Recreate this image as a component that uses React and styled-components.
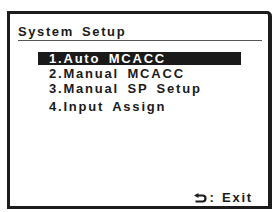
import styled, { createGlobalStyle } from "styled-components";

const Global = createGlobalStyle`
  body {
    margin: 0;
    background: #fff;
  }
`;

const items = [
  { label: "1.Auto MCACC", active: true },
  { label: "2.Manual MCACC" },
  { label: "3.Manual SP Setup" },
  { label: "4.Input Assign", gap: true },
];

export default function App() {
  return (
    <>
      <Global />
      <Screen>
        <Title>System Setup</Title>
        <Menu>
          {items.map((it) => (
            <Item key={it.label} $active={it.active} $gap={it.gap}>
              {it.label}
            </Item>
          ))}
        </Menu>
        <Footer>
          <svg width="13" height="10" viewBox="0 0 13 10">
            <path d="M0 2.5 L4.5 0 L4.5 5 Z" fill="#1a1a1a" />
            <path
              d="M4 2.5 H8.5 A3 3 0 0 1 8.5 8.5 H1.5"
              fill="none"
              stroke="#1a1a1a"
              strokeWidth="2.2"
            />
          </svg>
          <span>: Exit</span>
        </Footer>
      </Screen>
    </>
  );
}

const Screen = styled.div`
  box-sizing: border-box;
  margin: 11px 0 0 7px;
  width: 265px;
  height: 198px;
  border: 3px solid #1c1c1c;
  border-right-width: 4px;
  border-top-right-radius: 5px;
  display: flex;
  flex-direction: column;
  padding: 10px 6px 0 8px;
  font-family: "Liberation Sans", Arial, sans-serif;
  font-weight: bold;
  color: #1a1a1a;
`;

const Title = styled.div`
  font-size: 13px;
  line-height: 15px;
  letter-spacing: 1.6px;
  word-spacing: 3px;
  padding: 0 0 1px 0;
  border-bottom: 1px solid #555;
`;

const Menu = styled.div`
  display: flex;
  flex-direction: column;
  margin: 11px 0 0 20px;
  width: 203px;
`;

const Item = styled.div`
  font-size: 13px;
  line-height: 13px;
  height: 13px;
  letter-spacing: 1.8px;
  word-spacing: 3px;
  padding-left: 11px;
  margin-top: ${(p) => (p.$gap ? "3px" : "0")};
  margin-bottom: 2px;
  background: ${(p) => (p.$active ? "#1a1a1a" : "transparent")};
  color: ${(p) => (p.$active ? "#fff" : "#1a1a1a")};
`;

const Footer = styled.div`
  margin-top: auto;
  align-self: flex-end;
  display: flex;
  align-items: center;
  gap: 2px;
  margin-right: 9px;
  margin-bottom: 1px;
  font-size: 13px;
  letter-spacing: 1.8px;
  word-spacing: 1px;
  line-height: 14px;
`;
